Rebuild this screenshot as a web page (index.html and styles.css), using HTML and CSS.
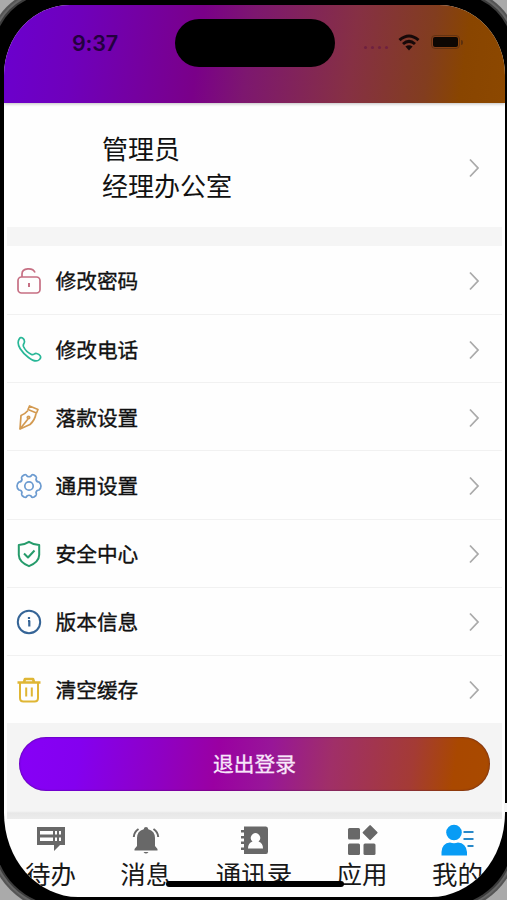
FILE: index.html
```html
<!DOCTYPE html>
<html lang="zh-CN">
<head>
<meta charset="utf-8">
<title>我的</title>
<link rel="stylesheet" href="styles.css">
</head>
<body>
<div class="device">
<div class="bezel"></div>
<main class="screen">
  <header class="status">
    <span class="time">9:37</span>
    <div class="island"></div>
    <div class="signals">
      <span class="dots"><i></i><i></i><i></i><i></i></span>
      <svg class="wifi" viewBox="0 0 22 17"><g fill="none" stroke="currentColor" stroke-width="3"><path d="M1.500 6.200Q11-2.200 20.500 6.200"/><path d="M5 10Q11 4.700 17 10"/></g><path d="M11 16.500L7.400 12.600Q11 9.800 14.600 12.600Z" fill="currentColor"/></svg>
      <span class="battery"></span>
    </div>
  </header>
  <section class="profile">
    <div class="who"><div>管理员</div><div>经理办公室</div></div>
    <svg class="chevron" viewBox="0 0 12 20"><path d="M2 1.500L10 10L2 18.500"/></svg>
  </section>
  <ul class="menu">
    <li class="row"><svg class="icon lock" viewBox="0 0 26 28"><rect x="2" y="10" width="22" height="16" rx="3.500"/><path d="M6 10V7C6 .5 17 .2 19 5.500"/><path d="M13 16v4" stroke-width="2"/></svg><span class="label">修改密码</span><svg class="chevron" viewBox="0 0 12 20"><path d="M2 1.500L10 10L2 18.500"/></svg></li>
    <li class="row"><svg class="icon phone" viewBox="0 0 26 28"><path d="M3.200 3C5-.2 8.500 2.500 8.500 5.500C8.500 8 6.600 8 7.500 10.500C9 14 12.500 17 15.500 18.500C18 19.600 18 17 20.500 17.500C24 18.300 26 21 23.500 23.500C21 26 17 25 12.500 21.500C6.500 17 -.5 9 3.200 3Z"/></svg><span class="label">修改电话</span><svg class="chevron" viewBox="0 0 12 20"><path d="M2 1.500L10 10L2 18.500"/></svg></li>
    <li class="row"><svg class="icon pen" viewBox="0 0 26 28"><path d="M13.500 2L22 5.500L20.500 9L12 5.500Z"/><path d="M12 6.500Q9 10 5 11.500L4 25L14 20.500Q19 16 20 9.500"/><path d="M4 25L12 15"/><circle cx="12.500" cy="13.500" r="1.200"/></svg><span class="label">落款设置</span><svg class="chevron" viewBox="0 0 12 20"><path d="M2 1.500L10 10L2 18.500"/></svg></li>
    <li class="row"><svg class="icon gear" viewBox="0 0 26 28"><path d="M8 3Q10 2 11 4Q13 5.500 15 4Q16 2 18 3L20 4.500Q21 5.500 20 7.500Q20.500 10 23 10Q25 11.500 25 14Q25 16.500 23 18Q20.500 18 20 20.500Q21 22.500 20 23.500L18 25Q16 26 15 24Q13 22.500 11 24Q10 26 8 25L6 23.500Q5 22.500 6 20.500Q5.500 18 3 18Q1 16.500 1 14Q1 11.500 3 10Q5.500 10 6 7.500Q5 5.500 6 4.500Z"/><circle cx="13" cy="14" r="4.200"/></svg><span class="label">通用设置</span><svg class="chevron" viewBox="0 0 12 20"><path d="M2 1.500L10 10L2 18.500"/></svg></li>
    <li class="row"><svg class="icon shield" viewBox="0 0 26 28"><path d="M13 1.800Q18 5 23.200 5V15Q23 22 13 26.200Q3 22 2.800 15V5Q8 5 13 1.800Z"/><path d="M8 13.500L12 17.500L18.500 10.500"/></svg><span class="label">安全中心</span><svg class="chevron" viewBox="0 0 12 20"><path d="M2 1.500L10 10L2 18.500"/></svg></li>
    <li class="row"><svg class="icon info" viewBox="0 0 26 28"><circle cx="13" cy="14" r="11.200"/><path d="M13 9v2M12 13h1.300v5.500" stroke-width="2.200"/></svg><span class="label">版本信息</span><svg class="chevron" viewBox="0 0 12 20"><path d="M2 1.500L10 10L2 18.500"/></svg></li>
    <li class="row"><svg class="icon trash" viewBox="0 0 26 28"><path d="M1.500 6.500H24.500M8 6L9 3H17L18 6" stroke-width="2.600"/><path d="M4 7V22Q4 25.500 7.500 25.500H18.500Q22 25.500 22 22V7M10.200 11.500v9M15.800 11.500v9"/></svg><span class="label">清空缓存</span><svg class="chevron" viewBox="0 0 12 20"><path d="M2 1.500L10 10L2 18.500"/></svg></li>
  </ul>
  <section class="actions"><button class="logout">退出登录</button></section>
  <nav class="tabs">
    <div class="tab"><svg viewBox="0 0 34 32"><path fill-rule="evenodd" d="M3 3H31V21H26L20 27V21H3ZM6 7V10.500H19V7ZM21 7V10.500H23V7ZM25 7V10.500H27V7ZM6 13.500V17H19V13.500ZM21 13.500V17H23V13.500ZM25 13.500V17H27V13.500Z"/></svg><span>待办</span></div>
    <div class="tab"><svg viewBox="0 0 34 32"><path d="M17 3q2 0 2.300 2.200Q26 7 26 14V22L28.500 25V26.500H5.500V25L8 22V14Q8 7 14.700 5.200Q15 3 17 3ZM14.500 28h5q-2.500 3-5 0Z"/><path class="line" d="M9.500 5Q5 8 4.800 13M24.500 5Q29 8 29.200 13"/></svg><span>消息</span></div>
    <div class="tab"><svg viewBox="0 0 34 32"><path fill-rule="evenodd" d="M7 2.500H29Q31 2.500 31 5V27.500Q31 30 29 30H7V26H4V23.500H7V20H4V17.500H7V14.500H4V12H7V8.500H4V6H7ZM11 24.500H26Q26 19 21.500 17.500Q24 15.500 23 12.500Q21.500 9 18.500 9Q15.500 9 14 12.500Q13 15.500 15.500 17.500Q11 19 11 24.500Z"/></svg><span>通讯录</span></div>
    <div class="tab"><svg viewBox="0 0 34 32"><rect x="3" y="4" width="12" height="11.500" rx="1.500"/><rect x="3" y="19.500" width="12" height="11.500" rx="1.500"/><rect x="18.500" y="19.500" width="12" height="11.500" rx="1.500"/><rect x="19.500" y="3" width="11.200" height="11.200" rx="1" transform="rotate(45 25.100 8.600)"/></svg><span>应用</span></div>
    <div class="tab active"><svg viewBox="0 0 34 32"><circle cx="14" cy="8.500" r="7.800"/><path d="M1.500 31.500V28Q2 19 10 18.500Q14 20 18 18.500Q26 19 27 28V31.500Z"/><path class="line" d="M23.500 8H33.500M23.500 15H33.500M27.500 22H33.500"/></svg><span>我的</span></div>
  </nav>
</main>
<div class="home-bar"></div>
<div class="side-key"></div>
</div>
</body>
</html>
```
FILE: styles.css
```css
* { box-sizing: border-box; }
body { margin: 0; background: #858585; font-family: "Liberation Sans", "Noto Sans CJK SC", sans-serif; color: #111; }
.device { position: relative; width: 507px; height: 900px; padding: 5px 2px 3px 4px; overflow: hidden; }
.bezel { position: absolute; inset: -6px; background: #000; border-radius: 58px 58px 68px 70px; box-shadow: 0 0 0 2px #3c3c3c, 0 0 0 4px #666, 0 0 0 6px #555, 0 0 0 40px #aaa; }
.screen { position: relative; display: flex; flex-direction: column; width: 501px; height: 892px; border-radius: 66px 66px 74px 74px / 70px 70px 84px 84px; overflow: hidden; background: #fefefe; }
.status { flex: none; height: 98px; display: grid; grid-template-columns: 171px 160px 1fr; align-items: start; background: linear-gradient(98deg, #6b00cf 0%, #6f00bb 15%, #7a0089 39%, #7d176f 49%, #863044 69%, #823d1f 84%, #894500 91%, #8c4800 100%); box-shadow: 0 1px 3px rgba(0,0,0,.25); z-index: 1; }
.time { margin: 25px 0 0 68px; font: 600 21.500px/26px Inter, sans-serif; color: #23003f; letter-spacing: -.2px; }
.island { margin-top: 14px; height: 48px; border-radius: 24px; background: #000; }
.signals { display: flex; align-items: center; margin: 28px 0 0 29px; color: #170909; height: 18px; }
.dots { display: flex; gap: 4px; margin-top: 11px; width: 34px; }
.dots i { width: 3px; height: 3px; border-radius: 50%; background: #6f2140; }
.wifi { width: 22px; height: 17px; }
.battery { position: relative; width: 29px; height: 14px; margin-left: 11px; border: 1px solid #643312; border-radius: 4px; background: #0d0703; background-clip: content-box; padding: 1px; }
.battery::after { content: ""; position: absolute; left: 29px; top: 4px; width: 2px; height: 5px; border-radius: 0 2px 2px 0; background: #5b300d; }
.profile { flex: none; height: 124px; display: flex; align-items: center; justify-content: space-between; padding: 5px 25px 0 98px; }
.who { font-size: 26px; line-height: 36.500px; padding-top: 2px; }
.chevron { flex: none; width: 12px; height: 20px; fill: none; stroke: #aaa; stroke-width: 1.800; }
.menu { flex: none; list-style: none; margin: 0 3px; padding: 19px 0 0; background: linear-gradient(#f5f5f5 19px, transparent 19px); }
.row { height: 68.200px; display: flex; align-items: center; padding: 2px 22px 0 9px; border-bottom: 1.500px solid #f1f1f1; }
.row:first-child { height: 69px; }
.row:last-child { border-bottom: 0; height: 67px; }
.icon { width: 26px; height: 28px; margin-right: 13.500px; fill: none; stroke: currentColor; stroke-width: 1.700; stroke-linejoin: round; }
.label { flex: 1; font-size: 20.700px; line-height: 28px; padding-top: 2px; -webkit-text-stroke: .35px #111; }
.lock { color: #c66f83; }
.phone { color: #28b797; }
.pen { color: #d39a51; }
.gear { color: #6c9bd0; }
.shield { color: #269b6b; stroke-width: 2; }
.info { color: #356496; stroke-width: 2; }
.trash { color: #dfb634; stroke-width: 2; }
.actions { flex: none; height: 96px; margin: 0 3px; padding: 14.500px 12px 0; background: linear-gradient(#f4f4f4 88px, #e7e7e7 90px, #ececec 96px); }
.logout { display: block; width: 471px; height: 54px; border: 0; border-radius: 27px; color: #f8e7fa; font: 400 20.700px/52px "Noto Sans CJK SC", sans-serif; -webkit-text-stroke: .3px #f8e7fa; padding: 0 0 2px; background: linear-gradient(98deg, #8700f7 0%, #8400ef 13%, #8f00c4 30%, #9a00a2 42%, #981698 53%, #a02f68 66%, #a43b35 83%, #a94800 92%, #a94a00 100%); box-shadow: inset 0 0 2px rgba(30,0,60,.7); }
.tabs { flex: 1; display: flex; justify-content: space-between; padding: 5px 22px 0 21px; }
.tab { display: flex; flex-direction: column; align-items: center; font-size: 25.500px; line-height: 36px; color: #181818; white-space: nowrap; }
.tab span { padding-top: 1px; }
.tab svg { width: 34px; height: 32px; fill: #686868; }
.tab .line { fill: none; stroke: #686868; stroke-width: 2; }
.tab.active svg { fill: #089cf5; }
.tab.active .line { stroke: #2888c8; }
.home-bar { position: absolute; left: 166px; top: 880.500px; width: 178px; height: 6px; border-radius: 3px; background: #000; }
.side-key { position: absolute; right: 0; top: 803px; width: 3px; height: 9px; background: #f4f4f4; }
```
